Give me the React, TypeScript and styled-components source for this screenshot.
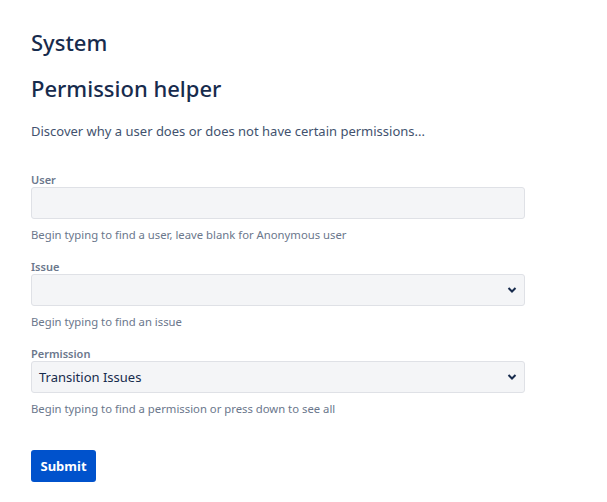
import React from "react";
import styled, { createGlobalStyle } from "styled-components";

const Global = createGlobalStyle`
  html, body { margin: 0; padding: 0; background: #fff; }
  body { font-family: "Noto Sans", sans-serif; color: #172B4D; }
`;

const Page = styled.div`
  padding: 26px 31px 20px 31px;
  width: 494px;
`;

const Title = styled.h1`
  margin: 0;
  font-size: 22px;
  font-weight: 500;
  line-height: 32px;
  color: #172B4D;
`;

const SubTitle = styled.h2`
  margin: 14px 0 0 0;
  font-size: 22px;
  font-weight: 500;
  line-height: 32px;
  color: #172B4D;
`;

const Intro = styled.p`
  margin: 17px 0 0 0;
  font-size: 13px;
  line-height: 20px;
  color: #42526E;
`;

const Form = styled.form`
  margin-top: 32px;
  display: flex;
  flex-direction: column;
`;

const Field = styled.div`
  display: flex;
  flex-direction: column;
  margin-bottom: 17px;
`;

const Label = styled.label`
  font-size: 11px;
  font-weight: 600;
  line-height: 14px;
  color: #6B778C;
`;

const Box = styled.div`
  position: relative;
  height: 32px;
  box-sizing: border-box;
  background: #F4F5F7;
  border: 1px solid #DFE1E6;
  border-radius: 3px;
  display: flex;
  align-items: center;
  padding: 0 7px;
  font-size: 13px;
  color: #172B4D;
`;

const Chevron = styled.svg`
  position: absolute;
  right: 7px;
  top: 50%;
  transform: translateY(-50%);
`;

const Help = styled.div`
  font-size: 11.3px;
  line-height: 16px;
  color: #6B778C;
  margin-top: 8px;
`;

const Button = styled.button`
  margin-top: 16px;
  align-self: flex-start;
  height: 32px;
  padding: 0 9.5px;
  background: #0052CC;
  color: #fff;
  border: none;
  border-radius: 3px;
  font-family: inherit;
  font-size: 13px;
  font-weight: 700;
`;

const Down = () => (
  <Chevron width="10" height="7" viewBox="0 0 10 7">
    <path d="M1.5 1.5 L5 5 L8.5 1.5" fill="none" stroke="#172B4D" strokeWidth="2" />
  </Chevron>
);

export default function App() {
  return (
    <Page>
      <Global />
      <Title>System</Title>
      <SubTitle>Permission helper</SubTitle>
      <Intro>Discover why a user does or does not have certain permissions...</Intro>
      <Form onSubmit={(e) => e.preventDefault()}>
        <Field>
          <Label>User</Label>
          <Box />
          <Help>Begin typing to find a user, leave blank for Anonymous user</Help>
        </Field>
        <Field>
          <Label>Issue</Label>
          <Box>
            <Down />
          </Box>
          <Help>Begin typing to find an issue</Help>
        </Field>
        <Field>
          <Label>Permission</Label>
          <Box>
            Transition Issues
            <Down />
          </Box>
          <Help>Begin typing to find a permission or press down to see all</Help>
        </Field>
        <Button type="submit">Submit</Button>
      </Form>
    </Page>
  );
}
